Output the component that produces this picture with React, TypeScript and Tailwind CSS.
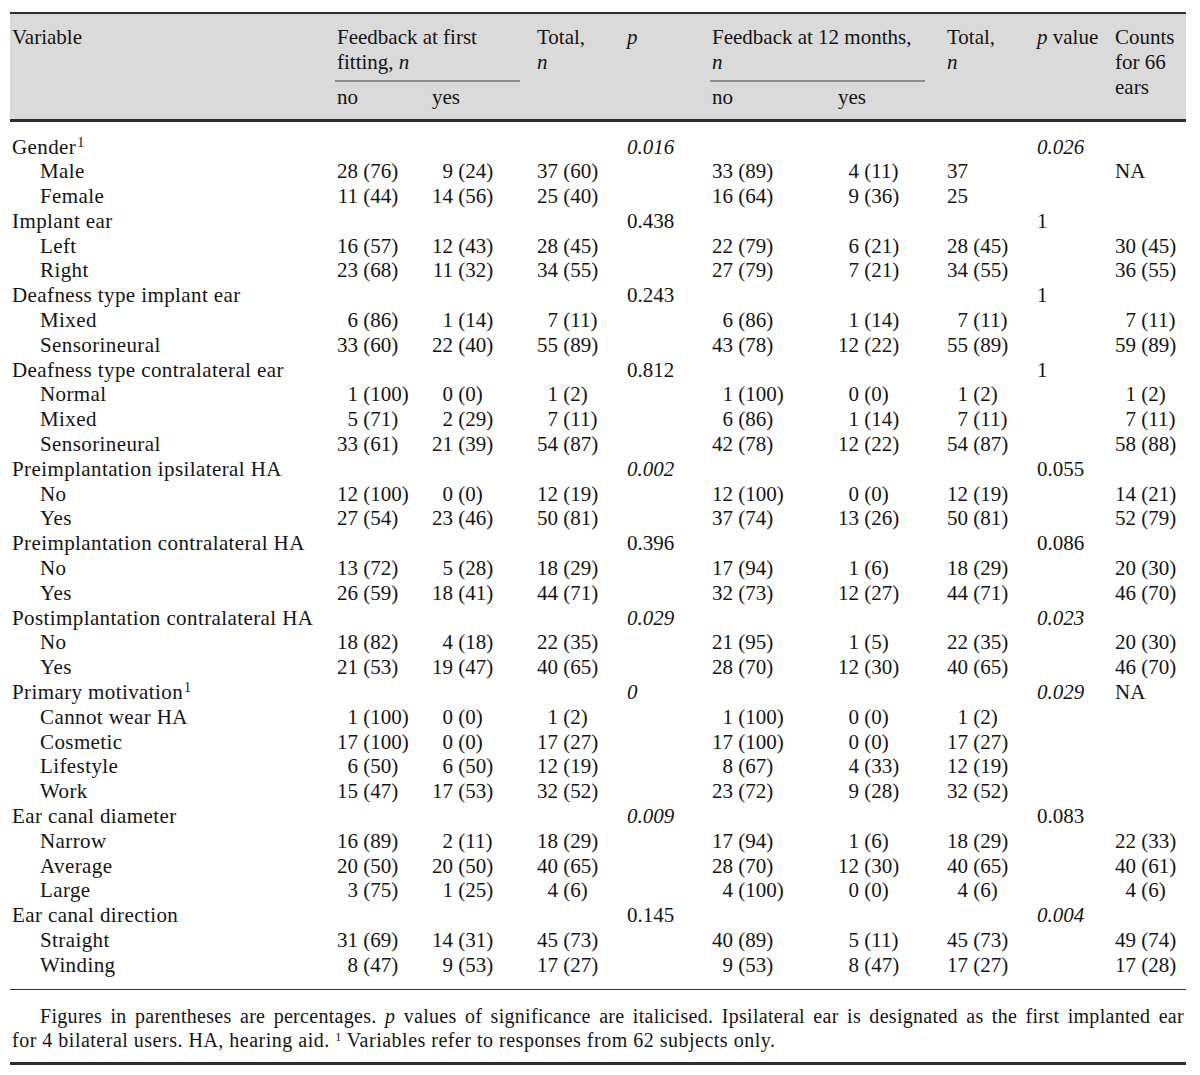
import React from "react";

type P = { v: string; i?: boolean };
type Row = { label: string; cells: string[]; counts?: string };
type Section = { label: string; sup?: boolean; p: P; p2: P; counts?: string; rows: Row[] };

const sections: Section[] = [
  {
    label: "Gender",
    sup: true,
    p: { v: "0.016", i: true },
    p2: { v: "0.026", i: true },
    rows: [
      { label: "Male", cells: ["28 (76)", "9 (24)", "37 (60)", "33 (89)", "4 (11)", "37"], counts: "NA" },
      { label: "Female", cells: ["11 (44)", "14 (56)", "25 (40)", "16 (64)", "9 (36)", "25"] },
    ],
  },
  {
    label: "Implant ear",
    p: { v: "0.438" },
    p2: { v: "1" },
    rows: [
      { label: "Left", cells: ["16 (57)", "12 (43)", "28 (45)", "22 (79)", "6 (21)", "28 (45)"], counts: "30 (45)" },
      { label: "Right", cells: ["23 (68)", "11 (32)", "34 (55)", "27 (79)", "7 (21)", "34 (55)"], counts: "36 (55)" },
    ],
  },
  {
    label: "Deafness type implant ear",
    p: { v: "0.243" },
    p2: { v: "1" },
    rows: [
      { label: "Mixed", cells: ["6 (86)", "1 (14)", "7 (11)", "6 (86)", "1 (14)", "7 (11)"], counts: "7 (11)" },
      { label: "Sensorineural", cells: ["33 (60)", "22 (40)", "55 (89)", "43 (78)", "12 (22)", "55 (89)"], counts: "59 (89)" },
    ],
  },
  {
    label: "Deafness type contralateral ear",
    p: { v: "0.812" },
    p2: { v: "1" },
    rows: [
      { label: "Normal", cells: ["1 (100)", "0 (0)", "1 (2)", "1 (100)", "0 (0)", "1 (2)"], counts: "1 (2)" },
      { label: "Mixed", cells: ["5 (71)", "2 (29)", "7 (11)", "6 (86)", "1 (14)", "7 (11)"], counts: "7 (11)" },
      { label: "Sensorineural", cells: ["33 (61)", "21 (39)", "54 (87)", "42 (78)", "12 (22)", "54 (87)"], counts: "58 (88)" },
    ],
  },
  {
    label: "Preimplantation ipsilateral HA",
    p: { v: "0.002", i: true },
    p2: { v: "0.055" },
    rows: [
      { label: "No", cells: ["12 (100)", "0 (0)", "12 (19)", "12 (100)", "0 (0)", "12 (19)"], counts: "14 (21)" },
      { label: "Yes", cells: ["27 (54)", "23 (46)", "50 (81)", "37 (74)", "13 (26)", "50 (81)"], counts: "52 (79)" },
    ],
  },
  {
    label: "Preimplantation contralateral HA",
    p: { v: "0.396" },
    p2: { v: "0.086" },
    rows: [
      { label: "No", cells: ["13 (72)", "5 (28)", "18 (29)", "17 (94)", "1 (6)", "18 (29)"], counts: "20 (30)" },
      { label: "Yes", cells: ["26 (59)", "18 (41)", "44 (71)", "32 (73)", "12 (27)", "44 (71)"], counts: "46 (70)" },
    ],
  },
  {
    label: "Postimplantation contralateral HA",
    p: { v: "0.029", i: true },
    p2: { v: "0.023", i: true },
    rows: [
      { label: "No", cells: ["18 (82)", "4 (18)", "22 (35)", "21 (95)", "1 (5)", "22 (35)"], counts: "20 (30)" },
      { label: "Yes", cells: ["21 (53)", "19 (47)", "40 (65)", "28 (70)", "12 (30)", "40 (65)"], counts: "46 (70)" },
    ],
  },
  {
    label: "Primary motivation",
    sup: true,
    p: { v: "0", i: true },
    p2: { v: "0.029", i: true },
    counts: "NA",
    rows: [
      { label: "Cannot wear HA", cells: ["1 (100)", "0 (0)", "1 (2)", "1 (100)", "0 (0)", "1 (2)"] },
      { label: "Cosmetic", cells: ["17 (100)", "0 (0)", "17 (27)", "17 (100)", "0 (0)", "17 (27)"] },
      { label: "Lifestyle", cells: ["6 (50)", "6 (50)", "12 (19)", "8 (67)", "4 (33)", "12 (19)"] },
      { label: "Work", cells: ["15 (47)", "17 (53)", "32 (52)", "23 (72)", "9 (28)", "32 (52)"] },
    ],
  },
  {
    label: "Ear canal diameter",
    p: { v: "0.009", i: true },
    p2: { v: "0.083" },
    rows: [
      { label: "Narrow", cells: ["16 (89)", "2 (11)", "18 (29)", "17 (94)", "1 (6)", "18 (29)"], counts: "22 (33)" },
      { label: "Average", cells: ["20 (50)", "20 (50)", "40 (65)", "28 (70)", "12 (30)", "40 (65)"], counts: "40 (61)" },
      { label: "Large", cells: ["3 (75)", "1 (25)", "4 (6)", "4 (100)", "0 (0)", "4 (6)"], counts: "4 (6)" },
    ],
  },
  {
    label: "Ear canal direction",
    p: { v: "0.145" },
    p2: { v: "0.004", i: true },
    rows: [
      { label: "Straight", cells: ["31 (69)", "14 (31)", "45 (73)", "40 (89)", "5 (11)", "45 (73)"], counts: "49 (74)" },
      { label: "Winding", cells: ["8 (47)", "9 (53)", "17 (27)", "9 (53)", "8 (47)", "17 (27)"], counts: "17 (28)" },
    ],
  },
];

const cols = "grid grid-cols-[325px_95px_105px_90px_85px_126px_109px_90px_78px_73px]";

// number right-aligned, percentage hangs off the parenthesis
const Val = ({ v }: { v?: string }) => {
  if (!v) return <div />;
  if (v === "NA") return <div className="pl-[2px]">NA</div>;
  const idx = v.indexOf(" (");
  const num = idx === -1 ? v : v.slice(0, idx);
  const pct = idx === -1 ? "" : v.slice(idx);
  return (
    <div className="pl-[2px] whitespace-pre">
      <span className="inline-block w-[2ch] text-right">{num}</span>
      <span>{pct}</span>
    </div>
  );
};

const PCell = ({ p }: { p: P }) => <div className={"pl-[2px] " + (p.i ? "italic" : "")}>{p.v}</div>;

export default function App() {
  return (
    <div
      className="bg-white text-[#141414] text-[21px] pt-[12px] pl-[10px] w-[1200px]"
      style={{ fontFamily: '"Liberation Serif", "Times New Roman", serif' }}
    >
      <div className="w-[1176px]">
        {/* header */}
        <div className="border-t-2 border-b-[3px] border-[#2e2e2e] bg-[#dadada]">
          <div className={cols + " grid-rows-[68px_37px] leading-[25px]"}>
            <div className="row-span-2 pt-[10.5px] pl-[2px]">Variable</div>
            <div className="col-span-2 mr-[15px]">
              <div className="pt-[10.5px] pb-[5.5px] pl-[2px] border-b-2 border-[#8c8c8c]">
                Feedback at first
                <br />
                fitting, <span className="italic">n</span>
              </div>
            </div>
            <div className="row-span-2 pt-[10.5px] pl-[2px]">
              Total,
              <br />
              <span className="italic">n</span>
            </div>
            <div className="row-span-2 pt-[10.5px] pl-[2px] italic">p</div>
            <div className="col-span-2 mr-[20px]">
              <div className="pt-[10.5px] pb-[5.5px] pl-[2px] border-b-2 border-[#8c8c8c]">
                Feedback at 12 months,
                <br />
                <span className="italic">n</span>
              </div>
            </div>
            <div className="row-span-2 pt-[10.5px] pl-[2px]">
              Total,
              <br />
              <span className="italic">n</span>
            </div>
            <div className="row-span-2 pt-[10.5px] pl-[2px]">
              <span className="italic">p</span> value
            </div>
            <div className="row-span-2 pt-[10.5px] pl-[2px]">
              Counts
              <br />
              for 66
              <br />
              ears
            </div>
            <div className="pt-[2.5px] pl-[2px]">no</div>
            <div className="pt-[2.5px] pl-[2px]">yes</div>
            <div className="pt-[2.5px] pl-[2px]">no</div>
            <div className="pt-[2.5px] pl-[2px]">yes</div>
          </div>
        </div>

        {/* body */}
        <div className="pt-[12.5px] pb-[11.5px] border-b-[1.5px] border-[#2e2e2e] leading-[24.8px]">
          {sections.map((s) => (
            <React.Fragment key={s.label}>
              <div className={cols + " h-[24.8px]"}>
                <div className="pl-[2px] whitespace-nowrap tracking-[0.4px]">
                  {s.label}
                  {s.sup && <sup className="text-[14px] -top-[7px] ml-[1px]">1</sup>}
                </div>
                <div />
                <div />
                <div />
                <PCell p={s.p} />
                <div />
                <div />
                <div />
                <PCell p={s.p2} />
                <Val v={s.counts} />
              </div>
              {s.rows.map((r, i) => (
                <div key={s.label + i} className={cols + " h-[24.8px]"}>
                  <div className="pl-[30px] whitespace-nowrap tracking-[0.4px]">{r.label}</div>
                  <Val v={r.cells[0]} />
                  <Val v={r.cells[1]} />
                  <Val v={r.cells[2]} />
                  <div />
                  <Val v={r.cells[3]} />
                  <Val v={r.cells[4]} />
                  <Val v={r.cells[5]} />
                  <div />
                  <Val v={r.counts} />
                </div>
              ))}
            </React.Fragment>
          ))}
        </div>

        {/* footnote */}
        <div className="pt-[14px] pb-[10px] border-b-[3px] border-[#2e2e2e] leading-[24px] text-[20px] px-[2px]">
          <div className="pl-[28px] text-justify [text-align-last:justify] whitespace-nowrap tracking-[0.3px]">
            Figures in parentheses are percentages. <span className="italic">p</span> values of significance are
            italicised. Ipsilateral ear is designated as the first implanted ear
          </div>
          <div className="tracking-[0.5px]">
            for 4 bilateral users. HA, hearing aid. <sup className="text-[12px] -top-[6px]">1</sup> Variables refer to
            responses from 62 subjects only.
          </div>
        </div>
      </div>
    </div>
  );
}
